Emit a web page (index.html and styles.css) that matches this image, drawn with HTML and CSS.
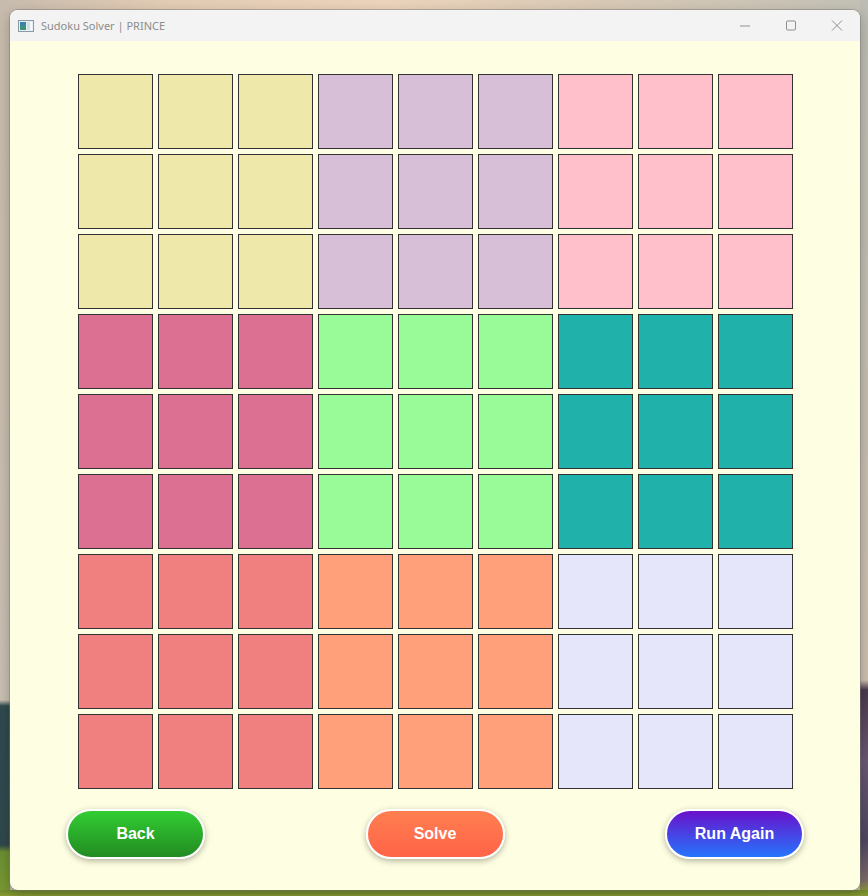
FILE: index.html
```html
<!DOCTYPE html>
<html lang="en">
<head>
<meta charset="utf-8">
<title>Sudoku Solver | PRINCE</title>
<link rel="stylesheet" href="styles.css">
</head>
<body>
<div class="window">
  <div class="titlebar">
    <div class="title">
      <svg class="app-icon" width="16" height="12" viewBox="0 0 16 12">
        <defs>
          <linearGradient id="ig" x1="0" y1="0" x2="0" y2="1">
            <stop offset="0" stop-color="#3a7fb8"/>
            <stop offset="1" stop-color="#3c9a6a"/>
          </linearGradient>
        </defs>
        <rect x="0.5" y="0.5" width="15" height="11" fill="#e8eef2" stroke="#8a9aa6"/>
        <rect x="2" y="2" width="6" height="8" fill="url(#ig)"/>
        <rect x="9" y="2" width="3" height="8" fill="#cfe0ea"/>
        <rect x="12" y="2" width="2" height="8" fill="#f6f9fb"/>
      </svg>
      <span>Sudoku Solver | PRINCE</span>
    </div>
    <div class="controls">
      <svg class="ctl" width="46" height="30" viewBox="0 0 46 30"><path d="M18 15.5 H28" stroke="#8f8f8f" stroke-width="1"/></svg>
      <svg class="ctl" width="46" height="30" viewBox="0 0 46 30"><rect x="18.5" y="10.5" width="9" height="9" rx="1" fill="none" stroke="#8f8f8f" stroke-width="1"/></svg>
      <svg class="ctl" width="46" height="30" viewBox="0 0 46 30"><path d="M18 10 L28 20 M28 10 L18 20" stroke="#8f8f8f" stroke-width="1"/></svg>
    </div>
  </div>
  <div class="content">
    <div class="board">
      <div class="cell c1"></div><div class="cell c1"></div><div class="cell c1"></div>
      <div class="cell c2"></div><div class="cell c2"></div><div class="cell c2"></div>
      <div class="cell c3"></div><div class="cell c3"></div><div class="cell c3"></div>
      <div class="cell c1"></div><div class="cell c1"></div><div class="cell c1"></div>
      <div class="cell c2"></div><div class="cell c2"></div><div class="cell c2"></div>
      <div class="cell c3"></div><div class="cell c3"></div><div class="cell c3"></div>
      <div class="cell c1"></div><div class="cell c1"></div><div class="cell c1"></div>
      <div class="cell c2"></div><div class="cell c2"></div><div class="cell c2"></div>
      <div class="cell c3"></div><div class="cell c3"></div><div class="cell c3"></div>

      <div class="cell c4"></div><div class="cell c4"></div><div class="cell c4"></div>
      <div class="cell c5"></div><div class="cell c5"></div><div class="cell c5"></div>
      <div class="cell c6"></div><div class="cell c6"></div><div class="cell c6"></div>
      <div class="cell c4"></div><div class="cell c4"></div><div class="cell c4"></div>
      <div class="cell c5"></div><div class="cell c5"></div><div class="cell c5"></div>
      <div class="cell c6"></div><div class="cell c6"></div><div class="cell c6"></div>
      <div class="cell c4"></div><div class="cell c4"></div><div class="cell c4"></div>
      <div class="cell c5"></div><div class="cell c5"></div><div class="cell c5"></div>
      <div class="cell c6"></div><div class="cell c6"></div><div class="cell c6"></div>

      <div class="cell c7"></div><div class="cell c7"></div><div class="cell c7"></div>
      <div class="cell c8"></div><div class="cell c8"></div><div class="cell c8"></div>
      <div class="cell c9"></div><div class="cell c9"></div><div class="cell c9"></div>
      <div class="cell c7"></div><div class="cell c7"></div><div class="cell c7"></div>
      <div class="cell c8"></div><div class="cell c8"></div><div class="cell c8"></div>
      <div class="cell c9"></div><div class="cell c9"></div><div class="cell c9"></div>
      <div class="cell c7"></div><div class="cell c7"></div><div class="cell c7"></div>
      <div class="cell c8"></div><div class="cell c8"></div><div class="cell c8"></div>
      <div class="cell c9"></div><div class="cell c9"></div><div class="cell c9"></div>
    </div>
    <div class="actions">
      <button class="btn btn-back">Back</button>
      <button class="btn btn-solve">Solve</button>
      <button class="btn btn-again">Run Again</button>
    </div>
  </div>
</div>
</body>
</html>
```

FILE: styles.css
```css
html, body {
  margin: 0;
  padding: 0;
  height: 100%;
}

body {
  width: 868px;
  height: 896px;
  overflow: hidden;
  box-sizing: border-box;
  padding: 10px 8px 6px 10px;
  background:
    linear-gradient(to bottom, #6f8a2e 0, #8a9a34 100%) 0 890px / 100% 6px no-repeat,
    linear-gradient(to bottom, #c7bcad 0, #c9bfb2 700px, #2f4a4f 706px, #30484c 845px, #6c8f33 852px, #7a9a34 896px) 0 0 / 10px 100% no-repeat,
    linear-gradient(to bottom, #bcbcb4 0, #cdbfae 680px, #4a3a4c 690px, #6a5872 760px, #4e4660 840px, #7d6b6a 880px, #8a9a34 892px) 100% 0 / 8px 100% no-repeat,
    linear-gradient(to right, #c9bcae 0, #e4cdb5 20%, #ecd4bb 45%, #d8c9b6 70%, #c3c1b6 100%) 0 0 / 100% 10px no-repeat,
    #c8bfb2;
}

.window {
  width: 850px;
  height: 880px;
  border-radius: 8px;
  overflow: hidden;
  display: flex;
  flex-direction: column;
  background: #fefee2;
  box-shadow: 0 0 0 1px rgba(120, 120, 120, 0.45), 0 4px 14px rgba(0, 0, 0, 0.25);
}

.titlebar {
  height: 31px;
  flex: none;
  background: #f3f3f3;
  display: flex;
  align-items: center;
  justify-content: space-between;
}

.title {
  display: flex;
  align-items: center;
  gap: 7px;
  padding-left: 8px;
  font-family: "Noto Sans", "DejaVu Sans", sans-serif;
  font-size: 11px;
  color: #8c8c8c;
}

.app-icon {
  display: block;
  margin-top: 1px;
}

.controls {
  display: flex;
  align-self: stretch;
  align-items: stretch;
  padding-right: 0;
}

.ctl {
  display: block;
  width: 46px;
  height: 31px;
}

.content {
  flex: 1;
  display: flex;
  flex-direction: column;
  align-items: stretch;
  padding-top: 33px;
}

.board {
  align-self: center;
  display: grid;
  grid-template-columns: repeat(9, 75px);
  grid-auto-rows: 75px;
  gap: 5px;
}

.cell {
  box-sizing: border-box;
  border: 1px solid #333333;
}

.c1 { background: #eee8aa; }
.c2 { background: #d8bfd8; }
.c3 { background: #ffc0cb; }
.c4 { background: #db7093; }
.c5 { background: #98fb98; }
.c6 { background: #20b2aa; }
.c7 { background: #f08080; }
.c8 { background: #ffa07a; }
.c9 { background: #e6e6fa; }

.actions {
  display: flex;
  justify-content: space-between;
  padding: 20px 56px 0 56px;
}

.btn {
  box-sizing: border-box;
  width: 139px;
  height: 50px;
  border: 2px solid #ffffff;
  border-radius: 25px;
  font-family: "Liberation Sans", Arial, sans-serif;
  font-weight: bold;
  font-size: 16px;
  color: #ffffff;
  box-shadow: 0 2px 6px rgba(0, 0, 0, 0.3);
  padding: 0;
}

.btn-back { background: linear-gradient(to bottom, #32cd32, #228b22); }
.btn-solve { background: linear-gradient(to bottom, #ff7f50, #ff6347); }
.btn-again { background: linear-gradient(to bottom, #6a11cb, #2575fc); }
```
